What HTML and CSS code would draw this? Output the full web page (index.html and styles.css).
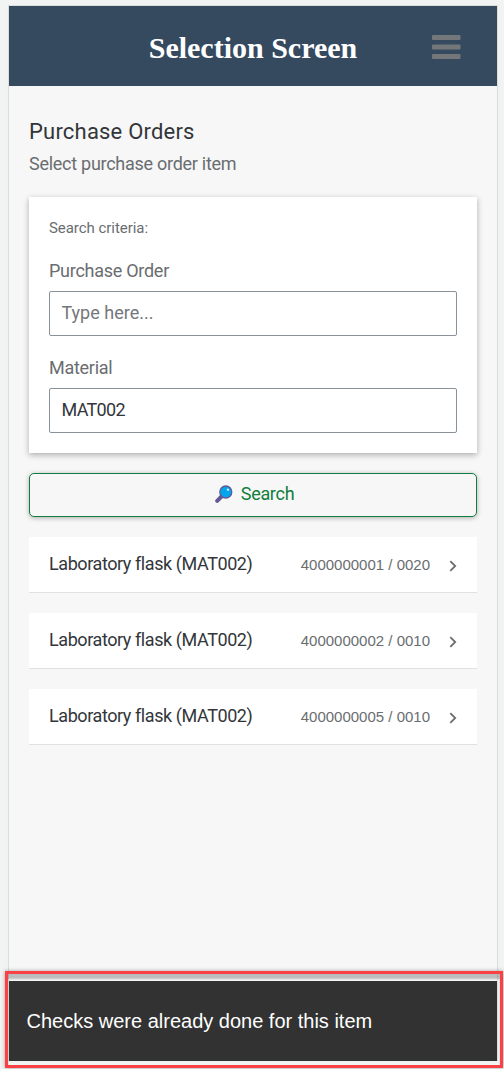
FILE: index.html
```html
<!DOCTYPE html>
<html lang="en">
<head>
<meta charset="utf-8">
<title>Selection Screen</title>
<link rel="stylesheet" href="styles.css">
</head>
<body>
<div class="app">
  <header class="bar">
    <h1 class="bar-title">Selection Screen</h1>
    <svg class="menu" width="30" height="26" viewBox="0 0 30 26"><g fill="#74777a"><rect x="1" y="1" width="28.5" height="5" rx="1"/><rect x="1" y="10.5" width="28.5" height="5" rx="1"/><rect x="1" y="20" width="28.5" height="5" rx="1"/></g></svg>
  </header>
  <main class="content">
    <h2 class="title">Purchase Orders</h2>
    <p class="subtitle">Select purchase order item</p>
    <section class="card">
      <p class="hint">Search criteria:</p>
      <label class="label label-order" for="po">Purchase Order</label>
      <input class="field field-order" id="po" type="text" placeholder="Type here...">
      <label class="label label-material" for="mat">Material</label>
      <input class="field" id="mat" type="text" value="MAT002">
    </section>
    <button class="search" type="button">
      <svg width="18" height="18" viewBox="0 0 18 18"><path d="M7 11 2.2 15.8" stroke="#635994" stroke-width="4" stroke-linecap="round"/><circle cx="10.8" cy="7" r="6" fill="#00a6ed" stroke="#635994" stroke-width="1.3"/><ellipse cx="12.9" cy="4.7" rx="1.1" ry="1.3" fill="#d9f3ff" transform="rotate(-35 12.9 4.7)"/></svg>
      <span class="search-text">Search</span>
    </button>
    <ul class="list">
      <li class="item"><span class="name">Laboratory flask (MAT002)</span><span class="num">4000000001 / 0020</span><svg class="chev" width="8" height="12" viewBox="0 0 8 12"><path d="M1.3 1.2 6.2 6 1.3 10.8" fill="none" stroke="#6a6d70" stroke-width="1.8"/></svg></li>
      <li class="item"><span class="name">Laboratory flask (MAT002)</span><span class="num">4000000002 / 0010</span><svg class="chev" width="8" height="12" viewBox="0 0 8 12"><path d="M1.3 1.2 6.2 6 1.3 10.8" fill="none" stroke="#6a6d70" stroke-width="1.8"/></svg></li>
      <li class="item"><span class="name">Laboratory flask (MAT002)</span><span class="num">4000000005 / 0010</span><svg class="chev" width="8" height="12" viewBox="0 0 8 12"><path d="M1.3 1.2 6.2 6 1.3 10.8" fill="none" stroke="#6a6d70" stroke-width="1.8"/></svg></li>
    </ul>
  </main>
  <footer class="toast"><span class="toast-text">Checks were already done for this item</span></footer>
</div>
<div class="highlight"></div>
</body>
</html>
```
FILE: styles.css
```css
* { box-sizing: border-box; }
html { height: 100%; overflow: hidden; background: #f2f4f3; }
body {
  position: relative;
  height: 1069px;
  margin: 0;
  padding: 5px 6px 8px 8px;
  font-family: Roboto, "Liberation Sans", sans-serif;
  color: #32363a;
}
h1, h2, p, ul { margin: 0; padding: 0; }
.app {
  display: flex;
  flex-direction: column;
  height: 1056px;
  border: 1px solid #d9dddc;
  border-bottom: 0;
  background: #f7f7f7;
  box-shadow: 0 0 8px rgba(0, 0, 0, 0.02);
}
.bar {
  display: grid;
  grid-template-columns: 60px 1fr 60px;
  align-items: center;
  height: 80px;
  background: #354a5f;
}
.bar-title {
  grid-column: 2;
  text-align: center;
  font: bold 30px/32px "Liberation Serif", serif;
  color: #fff;
  padding-top: 3px;
}
.menu { margin: 2px 0 0 -6px; }
.content { flex: 1; padding: 32px 20px 0; }
.title { font-size: 22px; line-height: 28px; font-weight: 400; letter-spacing: 0.2px; }
.subtitle { margin-top: 5px; font-size: 18px; line-height: 26px; letter-spacing: -0.27px; color: #6a6d70; }
.card {
  display: flex;
  flex-direction: column;
  height: 256px;
  margin-top: 20px;
  padding: 20px;
  background: #fff;
  box-shadow: 0 2px 6px rgba(0, 0, 0, 0.3);
}
.hint { font-size: 15px; line-height: 22px; letter-spacing: -0.05px; color: #6a6d70; }
.label { font-size: 18px; line-height: 24px; letter-spacing: -0.27px; color: #6a6d70; }
.label-order { margin-top: 20px; }
.label-material { margin-top: 20px; }
.field {
  height: 45px;
  flex: none;
  margin: 8px 0 0;
  padding: 0 11.5px 2px;
  border: 1px solid #89919a;
  border-radius: 2px;
  background: #fff;
  font: 18px Roboto, "Liberation Sans", sans-serif;
  letter-spacing: -0.7px;
  color: #32363a;
}
.field::placeholder { color: #74777a; opacity: 1; letter-spacing: 0; }
.search {
  display: flex;
  align-items: center;
  justify-content: center;
  gap: 8px;
  width: 100%;
  height: 44px;
  margin-top: 20px;
  padding: 0 0 3px;
  border: 1px solid #107e3e;
  border-radius: 5px;
  background: #f7f7f7;
  box-shadow: 0 1px 5px rgba(0, 0, 0, 0.3);
  font: 18px Roboto, "Liberation Sans", sans-serif;
  letter-spacing: -0.3px;
  color: #107e3e;
}
.search svg { margin-left: 3px; }
.list { display: grid; gap: 20px; margin-top: 20px; list-style: none; }
.item {
  display: flex;
  align-items: center;
  height: 56px;
  padding: 0 20px;
  border-bottom: 1px solid #e0e1e2;
  background: #fff;
}
.name { flex: 1; font-size: 18px; letter-spacing: -0.42px; padding-bottom: 2px; }
.num { font: 15px "Liberation Sans", sans-serif; color: #6a6d70; padding-bottom: 1px; }
.chev { margin: 2px 0 0 19px; }
.toast {
  display: flex;
  align-items: center;
  height: 80px;
  padding-left: 17.5px;
  background: #323232;
  color: #fff;
  font: 20px "Liberation Sans", sans-serif;
}
.highlight {
  position: absolute;
  left: 5px;
  top: 971px;
  width: 498px;
  height: 97px;
  border: 3px solid #fb4144;
  box-shadow: 0 0 4px rgba(0, 0, 0, 0.35), inset 0 5px 2px rgba(0, 0, 0, 0.24);
}
```
